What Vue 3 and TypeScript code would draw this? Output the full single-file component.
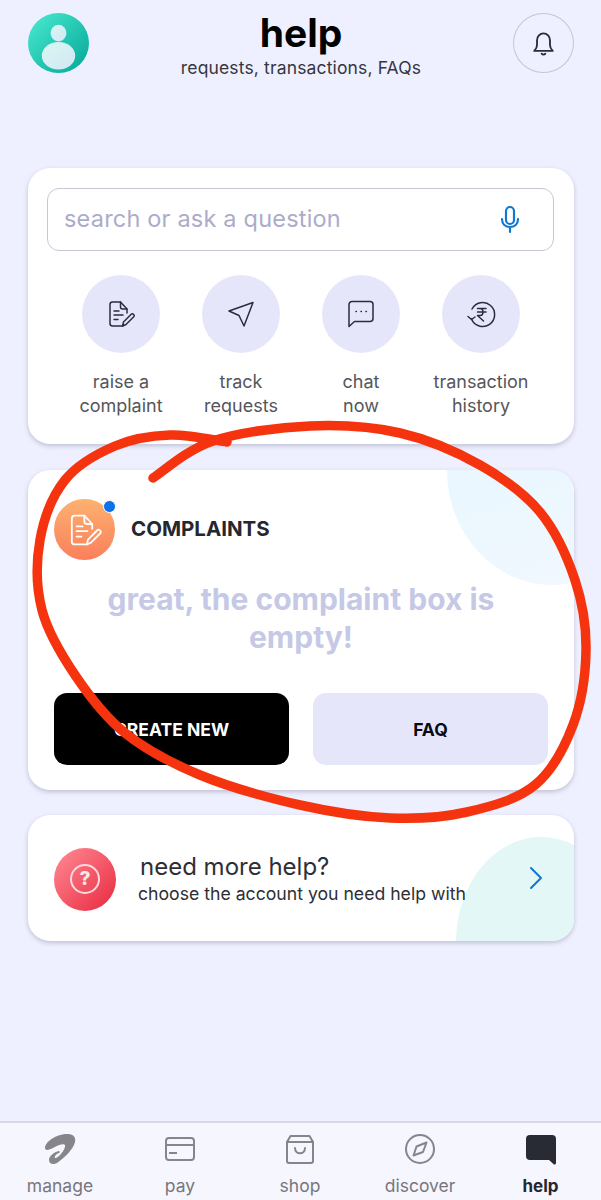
<script setup lang="ts">
const actions = [
  { id: "complaint", top: "raise a", bottom: "complaint" },
  { id: "track", top: "track", bottom: "requests" },
  { id: "chat", top: "chat", bottom: "now" },
  { id: "history", top: "transaction", bottom: "history" },
];

const tabs = [
  { id: "manage", label: "manage" },
  { id: "pay", label: "pay" },
  { id: "shop", label: "shop" },
  { id: "discover", label: "discover" },
  { id: "help", label: "help" },
];

// marker ring, traced point by point from where the pen started
const ring: [number, number][] = [
  [153, 478], [213, 441], [310, 426], [400, 433], [480, 465], [540, 512], [575, 580],
  [586, 650], [573, 725], [535, 785], [467, 812], [390, 818], [300, 805], [200, 775],
  [125, 733], [75, 675], [42, 610], [40, 540], [65, 480], [115, 446], [170, 435], [227, 442],
];

function smooth(pts: [number, number][]) {
  let d = `M${pts[0]![0]} ${pts[0]![1]}`;
  for (let i = 0; i < pts.length - 1; i++) {
    const p0 = pts[Math.max(i - 1, 0)]!;
    const p1 = pts[i]!;
    const p2 = pts[i + 1]!;
    const p3 = pts[Math.min(i + 2, pts.length - 1)]!;
    const c1x = p1[0] + (p2[0] - p0[0]) / 6;
    const c1y = p1[1] + (p2[1] - p0[1]) / 6;
    const c2x = p2[0] - (p3[0] - p1[0]) / 6;
    const c2y = p2[1] - (p3[1] - p1[1]) / 6;
    d += `C${c1x} ${c1y} ${c2x} ${c2y} ${p2[0]} ${p2[1]}`;
  }
  return d;
}

const ringPath = smooth(ring);
</script>

<template>
  <div class="page">
    <header class="top">
      <div class="avatar">
        <svg width="61" height="60" viewBox="0 0 62 60">
          <defs>
            <linearGradient id="person" x1="0" y1="0" x2="1" y2="1">
              <stop offset="0" stop-color="#d8f7f2" />
              <stop offset="1" stop-color="#d3e6f5" />
            </linearGradient>
          </defs>
          <ellipse cx="31" cy="20" rx="8" ry="8.500" fill="url(#person)" />
          <ellipse cx="31" cy="43" rx="17" ry="14" fill="url(#person)" />
        </svg>
      </div>
      <div class="heading">
        <h1>help</h1>
        <p>requests, transactions, FAQs</p>
      </div>
      <div class="bell">
        <svg width="23" height="25" viewBox="0 0 24 27" fill="none" stroke="#2a2c36" stroke-width="2" stroke-linejoin="round" stroke-linecap="round">
          <path d="M2 21.500c2-2 3-3.500 3-6.500V10a7 7.500 0 0 1 14 0v5c0 3 1 4.500 3 6.500z" />
          <path d="M10 24.500c1 1.300 3 1.300 4 0" />
        </svg>
      </div>
    </header>

    <main class="cards">
      <section class="card search-card">
        <div class="search">
          <span>search or ask a question</span>
          <svg width="22" height="29" viewBox="0 0 22 29" fill="none" stroke="#1277d0" stroke-width="2.200" stroke-linecap="round">
            <rect x="7" y="2" width="8" height="17" rx="4" />
            <path d="M3 14c0 5 3.500 8 8 8s8-3 8-8M11 22v5" />
          </svg>
        </div>
        <div class="actions">
          <div v-for="a in actions" :key="a.id" class="action">
            <div class="action-icon">
              <svg v-if="a.id === 'complaint'" width="30" height="30" viewBox="0 0 30 30" fill="none" stroke="#2a2c40" stroke-width="1.500" stroke-linecap="round" stroke-linejoin="round">
                <path d="M17 27H6.500A2.500 2.500 0 0 1 4 24.500v-19A2.500 2.500 0 0 1 6.500 3h8L21 10v4" />
                <path d="M14.500 3v5a2 2 0 0 0 2 2H21" />
                <path d="M8 12h5M8 16h9M8 20.500h4" />
                <path d="M16.500 27l1-4 8-8c1-1 3.500 1.200 2.500 2.500l-8 8z" />
              </svg>
              <svg v-else-if="a.id === 'track'" width="30" height="30" viewBox="0 0 30 30" fill="none" stroke="#2a2c40" stroke-width="1.500" stroke-linejoin="round">
                <path d="M27 3.500L3 12l10 4.500 5 10.500z" />
              </svg>
              <svg v-else-if="a.id === 'chat'" width="30" height="30" viewBox="0 0 30 30" fill="none" stroke="#2a2c40" stroke-width="1.500" stroke-linejoin="round" stroke-linecap="round">
                <path d="M3 5.500a3 3 0 0 1 3-3h18a3 3 0 0 1 3 3v14a3 3 0 0 1-3 3H8.500L3 27.500z" />
                <path d="M10 12.500h.4M15 12.500h.4M20 12.500h.4" />
              </svg>
              <svg v-else width="30" height="30" viewBox="0 0 30 30" fill="none" stroke="#2a2c40" stroke-width="1.500" stroke-linejoin="round" stroke-linecap="round">
                <path d="M6 10a12 12 0 1 1-.500 10" />
                <path d="M2 17.500l3.500 3L9 18" />
                <path d="M11.500 9.500h8.500M11.500 13h8.500M14 9.500c4 0 4 7 0 7h-2.500l6 5.500" />
              </svg>
            </div>
            <div class="action-label">{{ a.top }}<br />{{ a.bottom }}</div>
          </div>
        </div>
      </section>

      <section class="card complaints-card">
        <div class="blob blob-blue"></div>
        <div class="complaints-head">
          <div class="orange">
            <svg width="36" height="36" viewBox="0 0 30 30" fill="none" stroke="#fff" stroke-width="1.500" stroke-linecap="round" stroke-linejoin="round">
              <path d="M17 27H6.500A2.500 2.500 0 0 1 4 24.500v-19A2.500 2.500 0 0 1 6.500 3h8L21 10v4" />
              <path d="M14.500 3v5a2 2 0 0 0 2 2H21" />
              <path d="M8 12h5M8 16h9M8 20.500h4" />
              <path d="M16.500 27l1-4 8-8c1-1 3.500 1.200 2.500 2.500l-8 8z" />
            </svg>
            <span class="dot"></span>
          </div>
          <h2>COMPLAINTS</h2>
        </div>
        <p class="empty">great, the complaint box is<br />empty!</p>
        <div class="buttons">
          <div class="btn btn-dark">CREATE NEW</div>
          <div class="btn btn-light">FAQ</div>
        </div>
      </section>

      <section class="card more-card">
        <div class="blob blob-green"></div>
        <div class="red">
          <svg width="36" height="36" viewBox="0 0 36 36" fill="none">
            <circle cx="18" cy="18" r="14" stroke="#ffd9dc" stroke-width="2" />
            <text x="18" y="24" text-anchor="middle" class="qmark">?</text>
          </svg>
        </div>
        <div class="more-text">
          <div class="more-title">need more help?</div>
          <div class="more-sub">choose the account you need help with</div>
        </div>
        <svg class="chevron" width="14" height="24" viewBox="0 0 14 24" fill="none" stroke="#1277d0" stroke-width="2" stroke-linecap="round" stroke-linejoin="round">
          <path d="M2 2l10 10L2 22" />
        </svg>
      </section>
    </main>

    <nav class="tabbar">
      <div v-for="t in tabs" :key="t.id" class="tab" :class="{ active: t.id === 'help' }">
        <svg v-if="t.id === 'manage'" width="32" height="32" viewBox="0 0 32 32">
          <path fill="#85858a" d="M1 15C1 9 12 1 24 1c6 0 8 4 7 8-2 8-11 16-18 21-4 2-8 1-8-3 0-4 5-8 10-9 1 0 1 2 0 2-3 1-5 4-4 5 2 1 11-8 10-13-1-2-7 0-12 3-4 2-8 3-8 0z" />
        </svg>
        <svg v-else-if="t.id === 'pay'" width="32" height="32" viewBox="0 0 32 32" fill="none" stroke="#85858a" stroke-width="2">
          <rect x="2" y="5" width="28" height="22" rx="3" />
          <path d="M2 12h28" />
          <path d="M5 20h8" />
        </svg>
        <svg v-else-if="t.id === 'shop'" width="32" height="32" viewBox="0 0 32 32" fill="none" stroke="#85858a" stroke-width="2" stroke-linejoin="round" stroke-linecap="round">
          <path d="M3 9h26v19a2 2 0 0 1-2 2H5a2 2 0 0 1-2-2z" />
          <path d="M3 9l3.500-6h19L29 9" />
          <path d="M11 15c0 7 10 7 10 0" />
        </svg>
        <svg v-else-if="t.id === 'discover'" width="32" height="32" viewBox="0 0 32 32" fill="none" stroke="#85858a" stroke-width="2" stroke-linejoin="round">
          <circle cx="16" cy="16" r="14" />
          <path d="M9.500 22.500l3-9 10-4-3.500 9.500z" />
        </svg>
        <svg v-else width="32" height="32" viewBox="0 0 32 32">
          <path fill="#282b33" d="M5 2h22a4 4 0 0 1 4 4v24a1.500 1.500 0 0 1-2.600 1L24 27H5a4 4 0 0 1-4-4V6a4 4 0 0 1 4-4z" />
        </svg>
        <span>{{ t.label }}</span>
      </div>
    </nav>

    <!-- hand drawn marker ring over the complaints card -->
    <svg class="scribble" width="601" height="1200" viewBox="0 0 601 1200" fill="none">
      <path :d="ringPath" stroke="#f5340f" stroke-width="9.500" stroke-linecap="round" stroke-linejoin="round" />
    </svg>
  </div>
</template>

<style>
html,
body {
  margin: 0;
  background: #eff0ff;
}
</style>

<style scoped>
.page {
  position: relative;
  width: 601px;
  height: 1200px;
  overflow: hidden;
  display: flex;
  flex-direction: column;
  background: #eff0ff;
  font-family: Inter, "Liberation Sans", sans-serif;
}

.top {
  height: 168px;
  box-sizing: border-box;
  padding: 13px 27px 0 28px;
  display: flex;
  justify-content: space-between;
  align-items: flex-start;
}

.avatar {
  width: 61px;
  height: 60px;
  border-radius: 50%;
  overflow: hidden;
  background: linear-gradient(135deg, #4aecd0, #03a597);
}

.heading {
  text-align: center;
}

.heading h1 {
  margin: 0;
  font-size: 39px;
  line-height: 40px;
  font-weight: 700;
  color: #000;
}

.heading p {
  margin: 5px 0 0;
  font-size: 17.500px;
  letter-spacing: 0.15px;
  line-height: 20px;
  color: #35363f;
}

.bell {
  width: 61px;
  height: 60px;
  box-sizing: border-box;
  border: 1.500px solid #c5c5d2;
  border-radius: 50%;
  display: flex;
  align-items: center;
  justify-content: center;
}

.cards {
  flex: 1;
  padding: 0 27px 0 28px;
  display: flex;
  flex-direction: column;
  gap: 26px;
}

.card {
  position: relative;
  overflow: hidden;
  background: #fff;
  border-radius: 22px;
  box-shadow: 0 2px 5px rgba(70, 70, 100, 0.28);
}

.search-card {
  height: 276px;
  box-sizing: border-box;
  padding: 20px 20px 0 19px;
}

.search {
  height: 63px;
  box-sizing: border-box;
  border: 1.500px solid #c6c6d4;
  border-radius: 12px;
  padding: 0 32px 0 16px;
  display: flex;
  align-items: center;
  justify-content: space-between;
  font-size: 23.500px;
  letter-spacing: 0.2px;
  color: #abacc9;
}

.search span {
  margin-top: -2px;
}

.actions {
  margin-top: 24px;
  display: grid;
  grid-template-columns: repeat(4, 120px);
  padding-left: 14px;
}

.action {
  display: flex;
  flex-direction: column;
  align-items: center;
}

.action-icon {
  width: 78px;
  height: 78px;
  border-radius: 50%;
  background: #e6e6fb;
  display: flex;
  align-items: center;
  justify-content: center;
}

.action-label {
  margin-top: 17px;
  text-align: center;
  font-size: 18px;
  line-height: 24px;
  color: #55565c;
}

.complaints-card {
  height: 320px;
  box-sizing: border-box;
  padding: 29px 26px 0;
}

.blob {
  position: absolute;
  border-radius: 50%;
}

.blob-blue {
  left: 419px;
  top: -115px;
  width: 210px;
  height: 230px;
  background: linear-gradient(160deg, #e3f6fd, #f3f8ff);
}

.blob-green {
  left: 428px;
  top: 22px;
  width: 170px;
  height: 210px;
  background: #e2f7f6;
}

.complaints-head {
  position: relative;
  display: flex;
  align-items: center;
  gap: 16px;
}

.orange {
  position: relative;
  width: 61px;
  height: 61px;
  border-radius: 50%;
  background: linear-gradient(180deg, #fdb16f, #fb7f5c);
  display: flex;
  align-items: center;
  justify-content: center;
}

.dot {
  position: absolute;
  right: -1px;
  top: 1px;
  width: 11px;
  height: 11px;
  border-radius: 50%;
  border: 1.500px solid #fff;
  background: #0b72e7;
}

.complaints-head h2 {
  margin: 0 0 3px;
  font-size: 20.500px;
  font-weight: 700;
  color: #26272e;
}

.empty {
  position: relative;
  margin: 20px 0 0;
  text-align: center;
  font-size: 30px;
  line-height: 38px;
  font-weight: 700;
  color: #c5c9e6;
}

.buttons {
  margin-top: 37px;
  display: grid;
  grid-template-columns: 235px 235px;
  gap: 24px;
}

.btn {
  position: relative;
  height: 72px;
  border-radius: 13px;
  display: flex;
  align-items: center;
  justify-content: center;
  font-size: 17.500px;
  font-weight: 700;
}

.btn-dark {
  background: #000;
  color: #fff;
}

.btn-light {
  background: #e6e6fb;
  color: #0b0b14;
}

.more-card {
  height: 126px;
  margin-top: -1px;
  box-sizing: border-box;
  padding: 0 31px 0 26px;
  display: flex;
  align-items: center;
}

.red {
  width: 62px;
  height: 63px;
  margin-top: 2px;
  border-radius: 50%;
  background: linear-gradient(135deg, #ff8c95, #e9283f);
  display: flex;
  align-items: center;
  justify-content: center;
}

.qmark {
  font-size: 19px;
  font-weight: 800;
  fill: #ffe6e8;
}

.more-text {
  position: relative;
  margin: 2px 0 0 22px;
  flex: 1;
  white-space: nowrap;
}

.more-title {
  margin-left: 2px;
  font-size: 24px;
  line-height: 28px;
  color: #2e2f35;
}

.more-sub {
  font-size: 17.650px;
  line-height: 25px;
  color: #2e2f35;
}

.chevron {
  position: relative;
}

.tabbar {
  height: 79px;
  box-sizing: border-box;
  border-top: 2px solid #d7d7e6;
  background: #f6f6ff;
  display: grid;
  grid-template-columns: 120px 120px 120px 120px 121px;
  padding-top: 4px;
}

.tab {
  display: flex;
  flex-direction: column;
  align-items: center;
  justify-content: space-between;
  height: 69px;
  font-size: 17.500px;
  color: #77777d;
}

.tab svg {
  margin-top: 6px;
}

.tab.active {
  font-size: 17px;
  font-weight: 700;
  color: #26272e;
}

.scribble {
  position: absolute;
  left: 0;
  top: 0;
  pointer-events: none;
}
</style>
